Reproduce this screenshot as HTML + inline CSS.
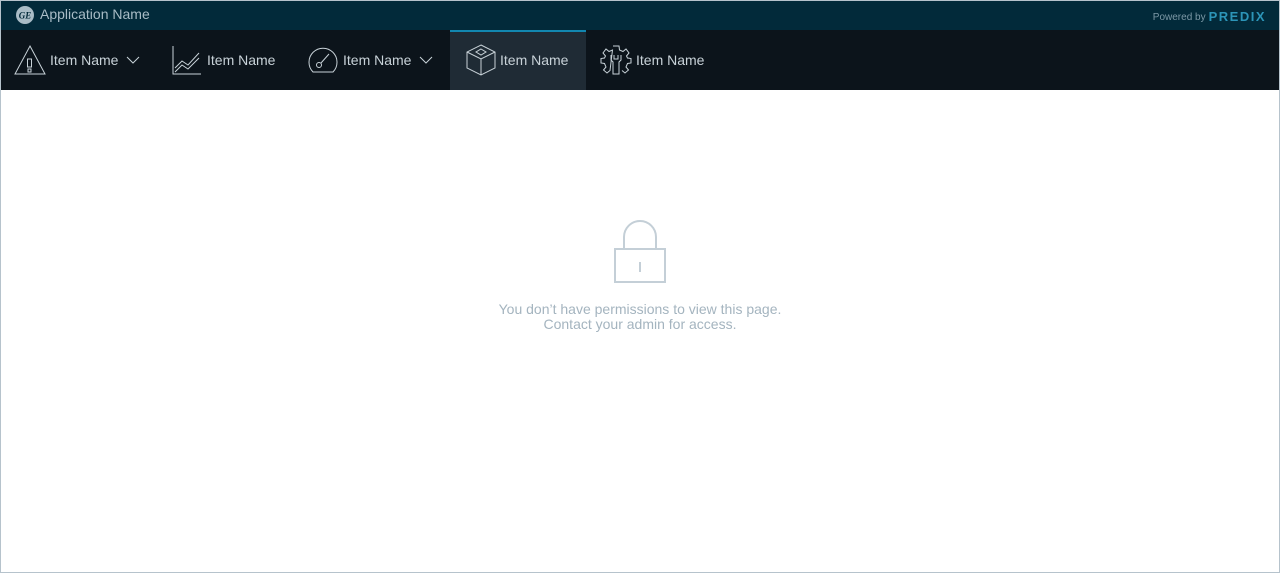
<!DOCTYPE html>
<html><head><style>
body{margin:0;width:1280px;height:573px;overflow:hidden;font-family:"Liberation Sans",sans-serif;background:#fff}
.frame{position:absolute;left:0;top:0;width:1278px;height:571px;border:1px solid #b6c3cc}
.top{position:absolute;left:0;top:0;width:1280px;height:29px;background:#022a3a;border-top:1px solid #2b4a58}
.app{position:absolute;left:40px;top:5px;color:#a9bcc6;font-size:14px}
.pw{position:absolute;right:14px;top:7px;color:#7c98a6;font-size:10px}
.pw b{color:#2c95b8;font-size:13px;letter-spacing:1.5px;margin-left:3px;position:relative;top:1px}
.nav{position:absolute;left:0;top:30px;width:1280px;height:60px;background:#0c141b}
.item{position:absolute;top:0;height:60px;color:#c8d2d8;font-size:14px;line-height:60px}
.item svg{position:absolute;top:14px}
.act{background:#1f2b35;border-top:2px solid #1287b0;box-sizing:border-box}
.msg{position:absolute;left:0;width:1280px;text-align:center;color:#a4b4bf;font-size:14px;line-height:15px;top:302px}
</style></head><body>
<div class="top">
<svg style="position:absolute;left:15px;top:4px" width="20" height="20" viewBox="0 0 20 20"><circle cx="10" cy="10" r="9" fill="#a9bcc6"/><text x="10" y="13.5" font-size="9" text-anchor="middle" fill="#022a3a" font-style="italic" font-weight="bold" font-family="Liberation Serif">GE</text></svg>
<div class="app">Application Name</div>
<div class="pw">Powered by<b>PREDIX</b></div>
</div>
<div class="nav">
<div class="item" style="left:14px;width:140px"><svg width="32" height="32" viewBox="0 0 32 32" fill="none" stroke="#c8d2d8" stroke-width="1"><path d="M16 2 L31 30 H1 Z"/><rect x="13.5" y="15" width="4" height="8"/><rect x="14" y="25" width="3" height="3"/></svg><span style="position:absolute;left:36px">Item Name</span><svg style="left:112px;top:26px" width="14" height="8" viewBox="0 0 14 8" fill="none" stroke="#c8d2d8"><path d="M1 1 L7 7 L13 1"/></svg></div>
<div class="item" style="left:172px;width:120px"><svg width="30" height="32" viewBox="0 0 30 32" fill="none" stroke="#c8d2d8"><path d="M1 2 V30 H29"/><path d="M3 24 L10 17 L16 21 L27 9"/><path d="M3 28 L10 21 L16 25 L27 14"/></svg><span style="position:absolute;left:35px">Item Name</span></div>
<div class="item" style="left:307px;width:140px"><svg width="32" height="32" viewBox="0 0 32 32" fill="none" stroke="#c8d2d8"><path d="M6 28 A14 14 0 1 1 26 28 Z"/><circle cx="12" cy="21" r="2.5"/><path d="M14 19 L22 10"/></svg><span style="position:absolute;left:36px">Item Name</span><svg style="left:112px;top:26px" width="14" height="8" viewBox="0 0 14 8" fill="none" stroke="#c8d2d8"><path d="M1 1 L7 7 L13 1"/></svg></div>
<div class="item act" style="left:450px;width:136px;line-height:56px"><svg style="left:16px;top:12px" width="30" height="32" viewBox="0 0 30 32" fill="none" stroke="#c8d2d8"><path d="M15 1 L29 8 V24 L15 31 L1 24 V8 Z"/><path d="M1 8 L15 15 L29 8 M15 15 V31"/><path d="M15 5 L20 8 L15 11 L10 8 Z"/></svg><span style="position:absolute;left:50px">Item Name</span></div>
<div class="item" style="left:600px;width:120px"><svg width="32" height="32" viewBox="0 0 32 32" fill="none" stroke="#c8d2d8"><path d="M13 2 H19 L19.5 6 L23 7.5 L26 5 L29 9 L26.5 12 L27.5 14 L31 14.5 V19 L27.5 19.5 L26 23 L28.5 26 L25 29 L22 26.5"/><path d="M10 26.5 L7 29 L3.5 26 L6 23 L4.5 19.5 L1 19 V14.5 L4.5 14 L5.5 12 L3 9 L6 5 L9 7.5 L12.5 6 Z"/><path d="M11 11 V16 L13 18 V30 H19 V18 L21 16 V11 M14 11 V15 H18 V11"/></svg><span style="position:absolute;left:36px">Item Name</span></div>
</div>
<svg style="position:absolute;left:614px;top:220px" width="52" height="64" viewBox="0 0 52 64" fill="none" stroke="#c4cfd7" stroke-width="2"><path d="M10 29 V17 A16 16 0 0 1 42 17 V29"/><rect x="1" y="29" width="50" height="33"/><path d="M26 42 V52"/></svg>
<div class="msg">You don’t have permissions to view this page.<br>Contact your admin for access.</div>
<div class="frame"></div>
</body></html>
